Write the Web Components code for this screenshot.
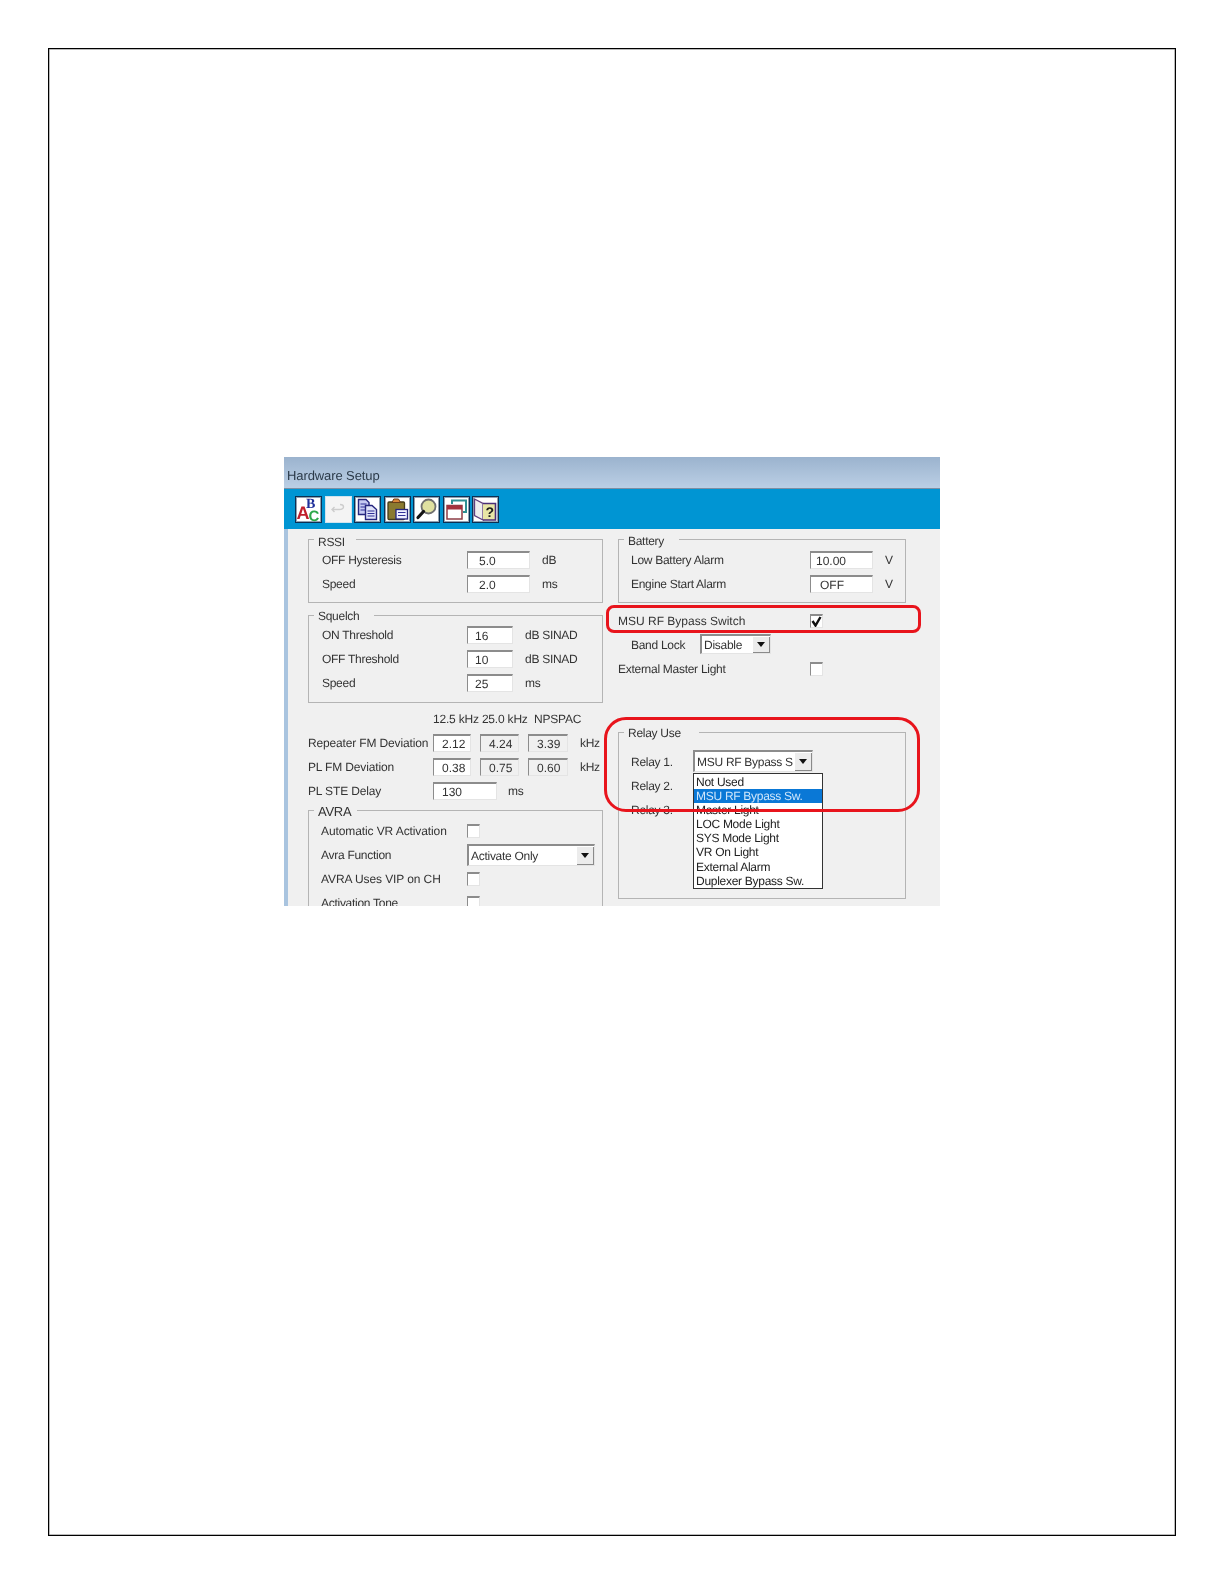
<!DOCTYPE html>
<html>
<head>
<meta charset="utf-8">
<title>Hardware Setup</title>
<style>
  html, body { margin: 0; background: #fff; }
  body { font: 12px "Liberation Sans", Arial, sans-serif; color: #333; letter-spacing: -.28px; text-rendering: geometricPrecision; }
</style>
</head>
<body>
<hw-sheet>
  <hw-window heading="Hardware Setup">
    <hw-tool slot="tools" icon="spell"></hw-tool>
    <hw-tool slot="tools" icon="undo" disabled></hw-tool>
    <hw-tool slot="tools" icon="copy"></hw-tool>
    <hw-tool slot="tools" icon="paste"></hw-tool>
    <hw-tool slot="tools" icon="find"></hw-tool>
    <hw-tool slot="tools" icon="windows"></hw-tool>
    <hw-tool slot="tools" icon="help"></hw-tool>

    <hw-column slot="left">
      <hw-group legend="RSSI" style="--pl:13px;--label:145px;--lg-right:11px">
        <hw-row label="OFF Hysteresis" unit="dB"><hw-input value="5.0" style="--w:63px;--pad:12px"></hw-input></hw-row>
        <hw-row label="Speed" unit="ms"><hw-input value="2.0" style="--w:63px;--pad:12px"></hw-input></hw-row>
      </hw-group>
      <hw-group legend="Squelch" style="--mt:12px;--pl:13px;--pt:7px;--pb:7px;--label:145px;--lg-right:15px;--lg-y:-2px">
        <hw-row label="ON Threshold" unit="dB SINAD"><hw-input value="16" style="--w:46px;--pad:8px"></hw-input></hw-row>
        <hw-row label="OFF Threshold" unit="dB SINAD"><hw-input value="10" style="--w:46px;--pad:8px"></hw-input></hw-row>
        <hw-row label="Speed" unit="ms"><hw-input value="25" style="--w:46px;--pad:8px"></hw-input></hw-row>
      </hw-group>
      <hw-deviation></hw-deviation>
      <hw-group legend="AVRA" style="--mt:7px;--lg-right:6px;--pl:12px;--label:146px;--legend-size:13px;--lg-y:-1px">
        <hw-row label="Automatic VR Activation" style="letter-spacing:-.1px"><hw-check></hw-check></hw-row>
        <hw-row label="Avra Function"><hw-select value="Activate Only" style="--w:128px;--h:22px"></hw-select></hw-row>
        <hw-row label="AVRA Uses VIP on CH" style="letter-spacing:-.1px"><hw-check></hw-check></hw-row>
        <hw-row label="Activation Tone"><hw-check></hw-check></hw-row>
      </hw-group>
    </hw-column>

    <hw-column slot="right">
      <hw-group legend="Battery" style="--pl:12px;--lg-right:15px;--label:179px;--lg-y:-1px">
        <hw-row label="Low Battery Alarm" unit="V"><hw-input value="10.00" style="--w:63px;--pad:6px"></hw-input></hw-row>
        <hw-row label="Engine Start Alarm" unit="V"><hw-input value="OFF" style="--w:63px;--pad:10px"></hw-input></hw-row>
      </hw-group>
      <hw-settings></hw-settings>
      <hw-group legend="Relay Use" style="--mt:51px;--pl:12px;--lg-right:18px;--label:62px;--pt:17px;--min-h:167px;--lg-y:-2px">
        <hw-row label="Relay 1.">
          <hw-select value="MSU RF Bypass S" style="--w:120px;--h:22px;margin-top:-2px">
            <hw-listbox selected="1" items="Not Used|MSU RF Bypass Sw.|Master Light|LOC Mode Light|SYS Mode Light|VR On Light|External Alarm|Duplexer Bypass Sw."></hw-listbox>
          </hw-select>
        </hw-row>
        <hw-row label="Relay 2."></hw-row>
        <hw-row label="Relay 3."></hw-row>
      </hw-group>
    </hw-column>

    <hw-highlight slot="over" style="left:322px;top:148px;width:315px;height:28px;--r:8px"></hw-highlight>
    <hw-highlight slot="over" style="left:320px;top:260px;width:316px;height:95px;--r:22px"></hw-highlight>
  </hw-window>
</hw-sheet>

<script>
class HwSheet extends HTMLElement {
  connectedCallback() {
    this.attachShadow({ mode: "open" }).innerHTML = `
      <style>
        :host { display: block; box-sizing: border-box; width: 1128px; height: 1488px; margin: 48px 0 0 48px;
          border: 1px solid #000; box-shadow: inset 0 0 0 .5px #777; padding: 408px 0 0 235px; }
      </style>
      <slot></slot>`;
  }
}

class HwWindow extends HTMLElement {
  connectedCallback() {
    this.attachShadow({ mode: "open" }).innerHTML = `
      <style>
        :host { display: flex; flex-direction: column; position: relative; width: 656px; height: 449px;
          overflow: hidden; filter: blur(.45px); background: #f0f0f0; }
        .title { height: 32px; flex: none; display: flex; align-items: center; padding: 6px 0 0 3px; box-sizing: border-box;
          font-size: 13px; letter-spacing: -.1px; color: #2b3a49; border-bottom: 1px solid #7d8fa3;
          background: linear-gradient(#9bb3ce, #bbcfe5); }
        .tools { height: 40px; flex: none; background: #0095d3; display: flex; align-items: center; gap: 2.5px; padding: 0 0 0 11px; box-sizing: border-box; }
        .body { flex: 1; display: grid; grid-template-columns: 295px 288px; column-gap: 15px; align-content: start;
          padding: 10px 0 0 20px; border-left: 4px solid #a9c4df; }
      </style>
      <div class="title">${this.getAttribute("heading")}</div>
      <div class="tools"><slot name="tools"></slot></div>
      <div class="body"><slot name="left"></slot><slot name="right"></slot></div>
      <slot name="over"></slot>`;
  }
}

const TOOL_ICONS = {
  spell: `<text x="1.5" y="23" font-family="Liberation Sans" font-weight="700" font-size="18" fill="#c0202c" letter-spacing="0">A</text>
    <text x="11" y="12" font-family="Liberation Serif" font-weight="700" font-size="14" fill="#1f2f9a" letter-spacing="0">B</text>
    <text x="13.5" y="24.5" font-family="Liberation Sans" font-weight="700" font-size="15" fill="#2ea84a" letter-spacing="0">C</text>`,
  undo: `<path d="M9.500 11 L7 13.500 L9.500 16 M7.500 13.500 H14 Q18.500 13.500 18.500 10.800 Q18.500 8.500 15 8.500" fill="none" stroke="#cdcdcd" stroke-width="1.400"/>`,
  copy: `<path d="M4.500 3.500 H12 L15 6.500 V18.500 H4.500 Z" fill="#c6caf2" stroke="#26267e" stroke-width="1.400"/>
    <path d="M11.500 9.500 H18 L22.500 13.500 V23.500 H11.500 Z" fill="#dfe2f9" stroke="#26267e" stroke-width="1.400"/>
    <path d="M6.500 8 H12.500 M6.500 11 H11 M6.500 14 H11 M13.500 15 H20.500 M13.500 17.500 H20.500 M13.500 20 H20.500" stroke="#2f2f95" stroke-width="1.200"/>`,
  paste: `<rect x="4" y="6" width="16.500" height="17.500" rx="1" fill="#8a7a30" stroke="#463c18" stroke-width="1.300"/>
    <path d="M8 6.500 L9.800 3 H14.500 L16.500 6.500 Z" fill="#d8873a" stroke="#6b3d18"/>
    <rect x="12" y="13.500" width="11.500" height="9.500" fill="#eef0ff" stroke="#26267e" stroke-width="1.300"/>
    <path d="M14 16.500 H21.500 M14 19.500 H21.500" stroke="#34349a"/>`,
  find: `<circle cx="15.500" cy="10.500" r="7" fill="#dfe0a0" stroke="#6f6f6f" stroke-width="1.800"/>
    <path d="M10.500 15.500 L5 21.500" stroke="#151515" stroke-width="3.200" stroke-linecap="round"/>`,
  windows: `<path d="M9 8 V4.500 H23 V16 H20" fill="none" stroke="#2d8f93" stroke-width="2"/>
    <rect x="4" y="9.500" width="15" height="13.500" fill="#fff" stroke="#8d3d46" stroke-width="1.500"/>
    <rect x="4" y="9.500" width="15" height="4" fill="#a5313c"/>`,
  help: `<path d="M2.500 3 L11 7.500 V24 L2.500 19.500 Z" fill="#eee" stroke="#5f3f7d" stroke-width="1.300"/>
    <path d="M11 7.500 H23.500 V24 H11" fill="#e8e6a6" stroke="#4b2f78" stroke-width="1.600"/>
    <text x="13.500" y="21" font-family="Liberation Sans" font-weight="700" font-size="14" fill="#1b1b1b" letter-spacing="0">?</text>`
};

class HwTool extends HTMLElement {
  connectedCallback() {
    const off = this.hasAttribute("disabled");
    this.attachShadow({ mode: "open" }).innerHTML = `
      <style>
        :host { display: block; width: 27px; height: 27px; box-sizing: border-box; background: ${off ? "#f4f4f4" : "#fff"};
          border: 1px solid ${off ? "#cfe3ee" : "#0c2f52"}; ${off ? "" : "box-shadow: inset 0 0 0 1px rgba(12,47,82,.45);"} }
        svg { display: block; margin: -1px; }
      </style>
      <svg width="27" height="27" viewBox="0 0 27 27">${TOOL_ICONS[this.getAttribute("icon")]}</svg>`;
  }
}

class HwColumn extends HTMLElement {
  connectedCallback() {
    this.attachShadow({ mode: "open" }).innerHTML = `<style>:host { display: block; }</style><slot></slot>`;
  }
}

class HwGroup extends HTMLElement {
  connectedCallback() {
    this.attachShadow({ mode: "open" }).innerHTML = `
      <style>
        :host { display: block; box-sizing: border-box; margin-top: var(--mt, 0); border: 1px solid #b4b4b4;
          padding: var(--pt, 8px) 0 var(--pb, 6px) var(--pl, 14px); min-height: var(--min-h, 0); }
        .legend { width: fit-content; height: 14px; line-height: 14px; margin: calc(-1 * var(--pt, 8px) - 5px) 0 0 -1px;
          transform: translate(calc(6px - var(--pl, 14px)), var(--lg-y, 0)); padding: 0 var(--lg-right, 15px) 0 4px;
          background: #f0f0f0; font-size: var(--legend-size, 12px); }
        .rows { margin-top: calc(var(--pt, 8px) - 9px); }
      </style>
      <div class="legend">${this.getAttribute("legend")}</div>
      <div class="rows"><slot></slot></div>`;
  }
}

class HwRow extends HTMLElement {
  connectedCallback() {
    const unit = this.getAttribute("unit");
    this.attachShadow({ mode: "open" }).innerHTML = `
      <style>
        :host { display: flex; align-items: center; height: 24px; }
        .label { width: var(--label, 144px); flex: none; white-space: nowrap; }
        .unit { margin-left: 12px; white-space: nowrap; }
      </style>
      <span class="label">${this.getAttribute("label")}</span>
      <slot></slot>
      ${unit ? `<span class="unit">${unit}</span>` : ""}`;
  }
}

class HwInput extends HTMLElement {
  connectedCallback() {
    this.attachShadow({ mode: "open" }).innerHTML = `
      <style>
        :host { display: block; box-sizing: border-box; flex: none; width: var(--w, 40px); height: 18px; line-height: 17px;
          padding-left: calc(var(--pad, 8px) - 1px); background: ${this.hasAttribute("disabled") ? "#f0f0f0" : "#fff"};
          border-top: 2px solid #8c8c8c; border-left: 1px solid #8c8c8c;
          border-right: 1px solid #e4e4e4; border-bottom: 1px solid #e4e4e4; font-size: 12px; letter-spacing: 0; }
      </style>
      ${this.getAttribute("value")}`;
  }
}

class HwCheck extends HTMLElement {
  connectedCallback() {
    const on = this.hasAttribute("checked");
    this.attachShadow({ mode: "open" }).innerHTML = `
      <style>
        :host { display: block; box-sizing: border-box; width: 13px; height: 14px; background: #fff; flex: none;
          border-top: 2px solid #8c8c8c; border-left: 1px solid #8c8c8c; border-right: 1px solid #e4e4e4; border-bottom: 1px solid #e4e4e4; }
        svg { display: block; }
      </style>
      ${on ? `<svg width="11" height="11" viewBox="0 0 11 11"><path d="M1.500 5 L4.500 9.500 L9.500 1" fill="none" stroke="#111" stroke-width="2.400"/></svg>` : ""}`;
  }
}

class HwSelect extends HTMLElement {
  connectedCallback() {
    this.attachShadow({ mode: "open" }).innerHTML = `
      <style>
        :host { display: flex; position: relative; box-sizing: border-box; flex: none; width: var(--w, 70px); height: var(--h, 20px);
          align-items: center; background: #fff; padding-left: 2px; white-space: nowrap;
          border-top: 2px solid #8c8c8c; border-left: 2px solid #8c8c8c; border-right: 1px solid #e4e4e4; border-bottom: 1px solid #e4e4e4; }
        .text { flex: 1; }
        .btn { width: 17px; height: calc(100% - 1px); flex: none; background: #ececec; display: flex; align-items: center; justify-content: center;
          border-right: 1px solid #8a8a8a; border-bottom: 1px solid #8a8a8a; box-sizing: border-box; }
        .btn i { width: 0; height: 0; border: 4px solid transparent; border-top: 5px solid #111; border-bottom: 0; }
      </style>
      <span class="text">${this.getAttribute("value")}</span>
      <span class="btn"><i></i></span>
      <slot></slot>`;
  }
}

class HwListbox extends HTMLElement {
  connectedCallback() {
    const sel = Number(this.getAttribute("selected"));
    const rows = this.getAttribute("items").split("|")
      .map((t, i) => `<div class="${i === sel ? "on" : ""}">${t}</div>`).join("");
    this.attachShadow({ mode: "open" }).innerHTML = `
      <style>
        :host { display: block; position: absolute; left: -2px; top: 21px; width: 130px; box-sizing: border-box;
          background: #fff; border: 1px solid #333; color: #222; padding: 1px 0 0; z-index: 2; }
        div { height: 14.100px; line-height: 14px; padding-left: 2px; }
        .on { background: #0a78d6; color: #cfe6fb; }
      </style>
      ${rows}`;
  }
}

class HwDeviation extends HTMLElement {
  connectedCallback() {
    const row = (label, a, b, c) => `
      <div class="row"><span class="label">${label}</span>
        <hw-input value="${a}" style="--w:38px;--pad:9px"></hw-input>
        <hw-input value="${b}" disabled style="--w:39px;--pad:9px"></hw-input>
        <hw-input value="${c}" disabled style="--w:40px;--pad:9px"></hw-input>
        <span class="unit">kHz</span></div>`;
    this.attachShadow({ mode: "open" }).innerHTML = `
      <style>
        :host { display: block; }
        .head { height: 16px; line-height: 16px; margin: 8px 0 4px 125px; white-space: nowrap; letter-spacing: -.2px; }
        .row { display: flex; align-items: center; height: 24px; gap: 9px; }
        .label { width: 116px; flex: none; white-space: nowrap; letter-spacing: -.15px; }
        .unit { margin-left: 3px; }
      </style>
      <div class="head">12.5 kHz 25.0 kHz&nbsp; NPSPAC</div>
      ${row("Repeater FM Deviation", "2.12", "4.24", "3.39")}
      ${row("PL FM Deviation", "0.38", "0.75", "0.60")}
      <div class="row"><span class="label">PL STE Delay</span>
        <hw-input value="130" style="--w:64px;--pad:9px"></hw-input>
        <span class="unit" style="margin-left:2px">ms</span></div>`;
  }
}

class HwSettings extends HTMLElement {
  connectedCallback() {
    this.attachShadow({ mode: "open" }).innerHTML = `
      <style>
        :host { display: block; margin-top: 6px; }
        .row { display: flex; align-items: center; height: 24px; white-space: nowrap; }
        .wide { width: 192px; flex: none; }
        .band { width: 69px; margin-left: 13px; flex: none; }
      </style>
      <div class="row"><span class="wide" style="letter-spacing:0">MSU RF Bypass Switch</span><hw-check checked></hw-check></div>
      <div class="row"><span class="band">Band Lock</span><hw-select value="Disable" style="--w:71px;--h:20px;margin-top:-2px"></hw-select></div>
      <div class="row"><span class="wide">External Master Light</span><hw-check></hw-check></div>`;
  }
}

class HwHighlight extends HTMLElement {
  connectedCallback() {
    this.attachShadow({ mode: "open" }).innerHTML = `
      <style>
        :host { display: block; position: absolute; box-sizing: border-box; border: 3px solid #e8141c;
          border-radius: var(--r, 8px); z-index: 5; }
      </style>`;
  }
}

customElements.define("hw-sheet", HwSheet);
customElements.define("hw-window", HwWindow);
customElements.define("hw-tool", HwTool);
customElements.define("hw-column", HwColumn);
customElements.define("hw-group", HwGroup);
customElements.define("hw-row", HwRow);
customElements.define("hw-input", HwInput);
customElements.define("hw-check", HwCheck);
customElements.define("hw-select", HwSelect);
customElements.define("hw-listbox", HwListbox);
customElements.define("hw-deviation", HwDeviation);
customElements.define("hw-settings", HwSettings);
customElements.define("hw-highlight", HwHighlight);
</script>
</body>
</html>
